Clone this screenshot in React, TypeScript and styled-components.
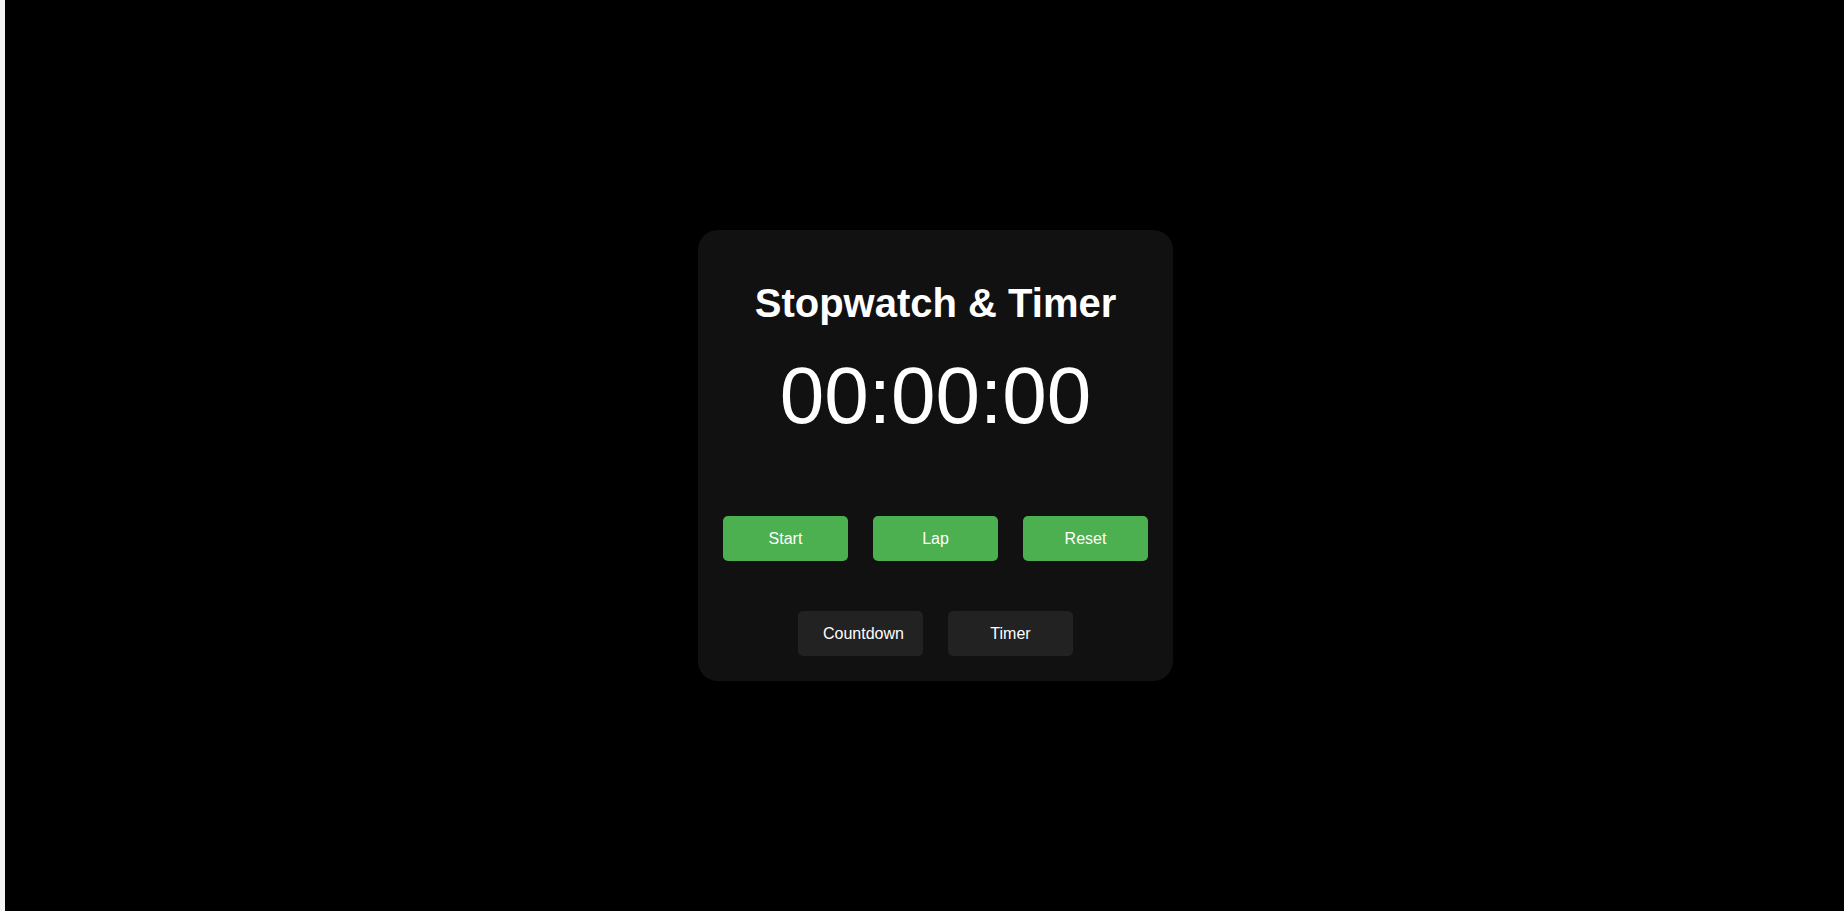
import React from "react";
import styled, { createGlobalStyle } from "styled-components";

const GlobalStyle = createGlobalStyle`
  html, body {
    margin: 0;
    padding: 0;
    background: #f4f4f4;
  }
  body {
    font-family: "Liberation Sans", Arial, sans-serif;
  }
`;

const Page = styled.div`
  margin-left: 5px;
  min-height: 911px;
  background: #000;
  display: flex;
  align-items: center;
  justify-content: center;
  padding-left: 22px;
  box-sizing: border-box;
`;

const Card = styled.div`
  width: 425px;
  padding: 25px;
  background: #111111;
  border-radius: 20px;
  display: flex;
  flex-direction: column;
  align-items: center;
  color: #fff;
`;

const Title = styled.h1`
  margin: 25px 0 0;
  font-size: 40px;
  line-height: 46px;
  font-weight: 700;
  color: #fff;
`;

const Display = styled.div`
  margin-top: 24px;
  font-size: 80px;
  line-height: 92px;
  font-weight: 400;
  color: #fff;
`;

const Row = styled.div<{ $top: number }>`
  display: flex;
  justify-content: center;
  gap: 25px;
  margin-top: ${(p) => p.$top}px;
  width: 100%;
`;

const Button = styled.button<{
  $variant?: "primary" | "secondary";
  $overflow?: boolean;
}>`
  width: 125px;
  height: 45px;
  box-sizing: border-box;
  padding: 0 25px;
  border: none;
  border-radius: 5px;
  font-family: "Liberation Sans", Arial, sans-serif;
  font-size: 16px;
  line-height: 19px;
  color: #fff;
  white-space: nowrap;
  display: flex;
  align-items: center;
  justify-content: ${(p) => (p.$overflow ? "flex-start" : "center")};
  cursor: pointer;
  background: ${(p) => (p.$variant === "secondary" ? "#222222" : "#4caf50")};
`;

export default function App() {
  return (
    <>
      <GlobalStyle />
      <Page>
        <Card>
          <Title>Stopwatch &amp; Timer</Title>
          <Display>00:00:00</Display>
          <Row $top={74}>
            <Button>Start</Button>
            <Button>Lap</Button>
            <Button>Reset</Button>
          </Row>
          <Row $top={50}>
            <Button $variant="secondary" $overflow>
              Countdown
            </Button>
            <Button $variant="secondary">Timer</Button>
          </Row>
        </Card>
      </Page>
    </>
  );
}
